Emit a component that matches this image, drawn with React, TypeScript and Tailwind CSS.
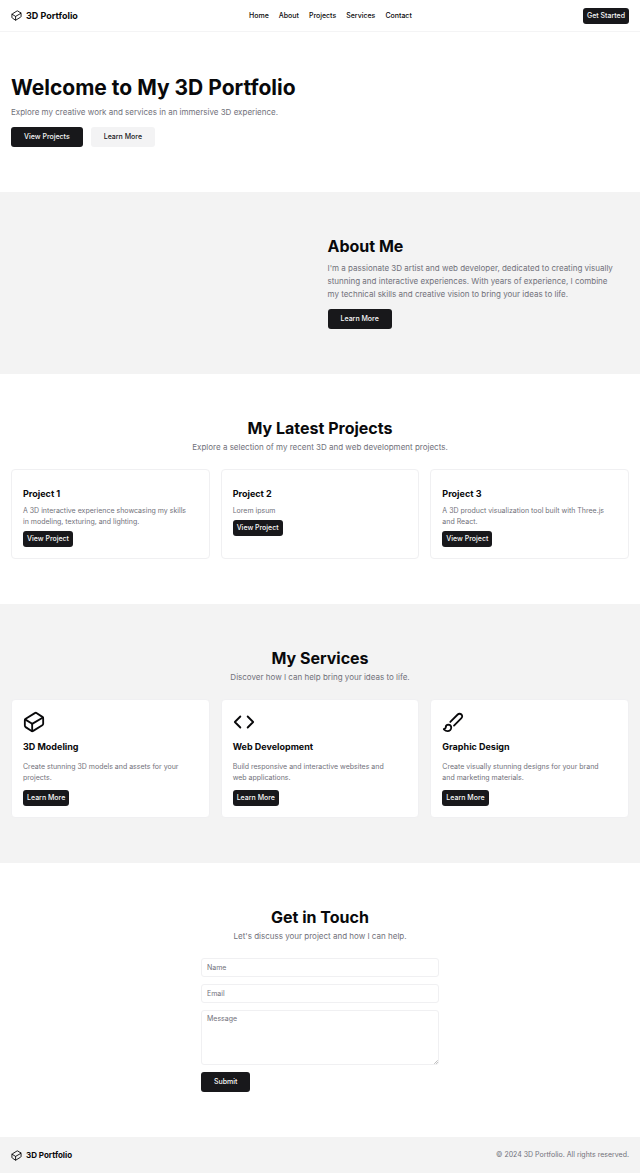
import { type ButtonHTMLAttributes, type ReactNode } from "react";
import { clsx } from "clsx";
import { Code, Cuboid } from "lucide-react";

const navLinks = ["Home", "About", "Projects", "Services", "Contact"];

const projects = [
  {
    title: "Project 1",
    description:
      "A 3D interactive experience showcasing my skills in modeling, texturing, and lighting.",
  },
  { title: "Project 2", description: "Lorem ipsum" },
  {
    title: "Project 3",
    description: "A 3D product visualization tool built with Three.js and React.",
  },
];

const services = [
  {
    icon: Cuboid,
    title: "3D Modeling",
    description: "Create stunning 3D models and assets for your projects.",
  },
  {
    icon: Code,
    title: "Web Development",
    description: "Build responsive and interactive websites and web applications.",
  },
  {
    icon: BrushIcon,
    title: "Graphic Design",
    description:
      "Create visually stunning designs for your brand and marketing materials.",
  },
];

function BrushIcon({ className }: { className?: string }) {
  return (
    <svg
      viewBox="0 0 24 24"
      fill="none"
      stroke="currentColor"
      strokeWidth="2"
      strokeLinecap="round"
      strokeLinejoin="round"
      className={className}
    >
      <path d="m9.06 11.9 8.07-8.06a2.85 2.85 0 1 1 4.03 4.03l-8.06 8.08" />
      <path d="M7.07 14.94c-1.66 0-3 1.35-3 3.02 0 1.33-2.5 1.52-2 2.02 1.08 1.1 2.49 2.02 4 2.02 2.2 0 4-1.8 4-4.04a3.01 3.01 0 0 0-3-3.02z" />
    </svg>
  );
}

function Button({
  size = "lg",
  variant = "primary",
  className,
  ...props
}: ButtonHTMLAttributes<HTMLButtonElement> & {
  size?: "sm" | "lg";
  variant?: "primary" | "secondary";
}) {
  return (
    <button
      className={clsx(
        "shrink-0 rounded-[3px] text-[7px] leading-[10px] font-medium whitespace-nowrap",
        size === "lg" ? "h-5 px-[13px]" : "h-4 px-1",
        variant === "primary"
          ? "bg-[#18181b] text-[#fafafa]"
          : "bg-[#f3f3f4] text-[#18181b]",
        className
      )}
      {...props}
    />
  );
}

function SectionHeading({ title, children }: { title: string; children: ReactNode }) {
  return (
    <div className="mb-[15px] text-center">
      <h2 className="text-[16px] leading-[18px] font-bold">{title}</h2>
      <p className="mt-1 text-[8px] leading-[13px] text-[#71717a]">{children}</p>
    </div>
  );
}

const fieldClass =
  "block w-full rounded-[3px] border border-[#f0f0f2] bg-white px-[5px] text-[7px] leading-[10px] placeholder:text-[#71717a]";

export default function App() {
  return (
    <div className="bg-white font-['Inter',sans-serif] text-[#09090b]">
      <header className="flex h-8 items-center justify-between border-b border-[#f4f4f5] px-[11px]">
        <a href="#" className="flex items-center gap-1">
          <Cuboid className="size-[11px]" />
          <span className="text-[9px] leading-[14px] font-bold">3D Portfolio</span>
        </a>
        <nav className="flex gap-[10px]">
          {navLinks.map((link) => (
            <a
              key={link}
              href={`#${link.toLowerCase()}`}
              className="text-[7px] leading-[10px] font-medium"
            >
              {link}
            </a>
          ))}
        </nav>
        <Button size="sm">Get Started</Button>
      </header>

      <main>
        <section id="home" className="px-[11px] py-[45px]">
          <h1 className="text-[21px] leading-[22px] font-bold">
            Welcome to My 3D Portfolio
          </h1>
          <p className="mt-[7px] mb-2 text-[8px] leading-[13px] text-[#71717a]">
            Explore my creative work and services in an immersive 3D experience.
          </p>
          <div className="flex gap-2">
            <Button>View Projects</Button>
            <Button variant="secondary">Learn More</Button>
          </div>
        </section>

        <section
          id="about"
          className="grid grid-cols-2 gap-[15px] bg-[#f3f3f3] px-[11px] py-[45px]"
        >
          <div className="col-start-2">
            <h2 className="text-[16px] leading-[18px] font-bold">About Me</h2>
            <p className="mt-[7px] mb-2 pr-3 text-[8px] leading-[13px] text-[#71717a]">
              I'm a passionate 3D artist and web developer, dedicated to creating
              visually stunning and interactive experiences. With years of
              experience, I combine my technical skills and creative vision to
              bring your ideas to life.
            </p>
            <Button className="block">Learn More</Button>
          </div>
        </section>

        <section id="projects" className="px-[11px] py-[45px]">
          <SectionHeading title="My Latest Projects">
            Explore a selection of my recent 3D and web development projects.
          </SectionHeading>
          <div className="grid grid-cols-3 gap-[11px]">
            {projects.map((project) => (
              <article
                key={project.title}
                className="rounded-[4px] border border-[#f0f0f2] px-[11px] pt-[17px] pb-[11px]"
              >
                <h3 className="text-[9px] leading-[14px] font-bold">{project.title}</h3>
                <p className="my-1 pr-[10px] text-[7px] leading-[11px] text-[#71717a]">
                  {project.description}
                </p>
                <Button size="sm" className="block">
                  View Project
                </Button>
              </article>
            ))}
          </div>
        </section>

        <section id="services" className="bg-[#f3f3f3] px-[11px] py-[45px]">
          <SectionHeading title="My Services">
            Discover how I can help bring your ideas to life.
          </SectionHeading>
          <div className="grid grid-cols-3 gap-[11px]">
            {services.map((service) => (
              <article
                key={service.title}
                className="rounded-[4px] border border-[#f0f0f2] bg-white p-[11px]"
              >
                <service.icon className="block size-[22px]" />
                <h3 className="my-[7px] text-[9px] leading-[14px] font-bold">
                  {service.title}
                </h3>
                <p className="mb-[7px] pr-[10px] text-[7px] leading-[11px] text-[#71717a]">
                  {service.description}
                </p>
                <Button size="sm" className="block">
                  Learn More
                </Button>
              </article>
            ))}
          </div>
        </section>

        <section id="contact" className="px-[11px] py-[45px]">
          <SectionHeading title="Get in Touch">
            Let's discuss your project and how I can help.
          </SectionHeading>
          <form className="mx-auto flex max-w-[238px] flex-col items-start gap-[7px]">
            <input
              type="text"
              aria-label="Name"
              placeholder="Name"
              className={clsx(fieldClass, "h-[19px]")}
            />
            <input
              type="email"
              aria-label="Email"
              placeholder="Email"
              className={clsx(fieldClass, "h-[19px]")}
            />
            <div className="relative w-full">
              <textarea
                aria-label="Message"
                placeholder="Message"
                className={clsx(fieldClass, "h-[55px] resize-none py-[3px]")}
              />
              <svg
                viewBox="0 0 4 4"
                fill="none"
                stroke="#8a8a8a"
                strokeWidth="0.6"
                className="pointer-events-none absolute right-px bottom-px size-1"
              >
                <path d="M0.3 3.8 3.8 0.3M2.2 3.8 3.8 2.2" />
              </svg>
            </div>
            <Button type="submit">Submit</Button>
          </form>
        </section>
      </main>

      <footer className="flex h-9 items-center justify-between bg-[#f3f3f3] px-[11px]">
        <a href="#" className="flex items-center gap-1">
          <Cuboid className="size-[11px]" />
          <span className="text-[8px] leading-[14px] font-bold">3D Portfolio</span>
        </a>
        <p className="text-[7px] leading-[10px] text-[#71717a]">
          © 2024 3D Portfolio. All rights reserved.
        </p>
      </footer>
    </div>
  );
}
